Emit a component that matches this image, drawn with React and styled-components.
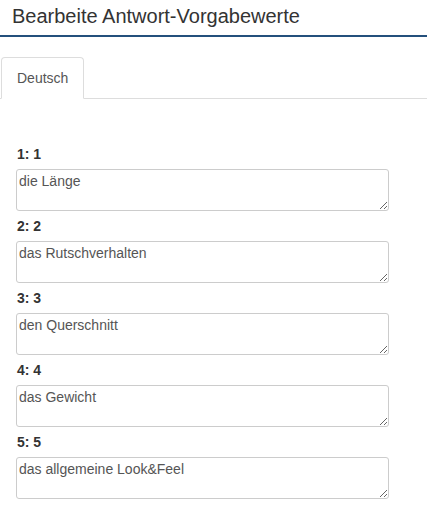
import React from 'react'
import styled, { createGlobalStyle } from 'styled-components'

const Global = createGlobalStyle`
  body {
    margin: 0;
    background: #fff;
    font-family: 'Liberation Sans', Arial, sans-serif;
    color: #333;
  }
`

const Header = styled.div`
  height: 35px;
  border-bottom: 2px solid #24507c;
  padding-left: 12px;
  h1 {
    margin: 0;
    font-size: 20px;
    font-weight: normal;
    line-height: 33px;
    color: #333;
  }
`

const Tabs = styled.ul`
  list-style: none;
  margin: 20px 0 0;
  padding: 0 0 0 1px;
  display: flex;
  border-bottom: 1px solid #ddd;
`

const Tab = styled.li`
  margin-bottom: -1px;
  padding: 10px 15px;
  line-height: 20px;
  font-size: 14px;
  color: #555;
  border: 1px solid ${p => (p.active ? '#ddd' : 'transparent')};
  border-bottom-color: ${p => (p.active ? '#fff' : 'transparent')};
  border-radius: 4px 4px 0 0;
  background: #fff;
`

const Form = styled.div`
  padding: 45px 0 0 16px;
`

const Label = styled.label`
  display: block;
  font-size: 14px;
  font-weight: bold;
  line-height: 20px;
  margin-bottom: 5px;
  padding-left: 1px;
  color: #333;
`

const Field = styled.textarea`
  display: block;
  box-sizing: border-box;
  width: 373px;
  height: 42px;
  margin: 0 0 5px;
  padding: 1px 2px;
  border: 1px solid #ccc;
  border-radius: 3px;
  font-family: 'Liberation Sans', Arial, sans-serif;
  font-size: 14px;
  line-height: 20px;
  color: #555;
  resize: vertical;
  outline: none;
`

const values = [
  'die Länge',
  'das Rutschverhalten',
  'den Querschnitt',
  'das Gewicht',
  'das allgemeine Look&Feel',
]

export default function App() {
  return (
    <>
      <Global />
      <Header>
        <h1>Bearbeite Antwort-Vorgabewerte</h1>
      </Header>
      <Tabs>
        <Tab active>Deutsch</Tab>
      </Tabs>
      <Form>
        {values.map((v, i) => (
          <div key={i}>
            <Label>{i + 1}: {i + 1}</Label>
            <Field defaultValue={v} />
          </div>
        ))}
      </Form>
    </>
  )
}
